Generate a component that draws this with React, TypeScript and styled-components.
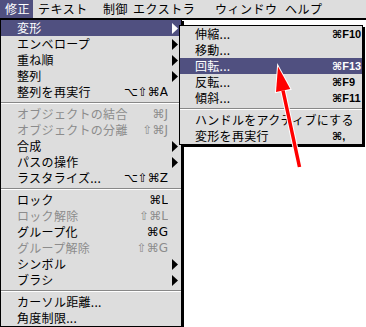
import styled, { createGlobalStyle } from "styled-components";

const GlobalStyle = createGlobalStyle`
  html, body {
    margin: 0;
    padding: 0;
    background: #ffffff;
  }
  body {
    font-family: "Noto Sans CJK JP", "DejaVu Sans", sans-serif;
  }
`;

type Entry =
  | "sep"
  | {
      label: string;
      shortcut?: string;
      sub?: boolean;
      disabled?: boolean;
      active?: boolean;
    };

const barItems = [
  { label: "修正", w: 33, active: true },
  { label: "テキスト", w: 65 },
  { label: "制御", w: 30 },
  { label: "エクストラ", w: 82 },
  { label: "ウィンドウ", w: 70 },
  { label: "ヘルプ", w: 60 },
];

const mainItems: Entry[] = [
  { label: "変形", sub: true, active: true },
  { label: "エンベロープ", sub: true },
  { label: "重ね順", sub: true },
  { label: "整列", sub: true },
  { label: "整列を再実行", shortcut: "⌥⇧⌘A" },
  "sep",
  { label: "オブジェクトの結合", shortcut: "⌘J", disabled: true },
  { label: "オブジェクトの分離", shortcut: "⇧⌘J", disabled: true },
  { label: "合成", sub: true },
  { label: "パスの操作", sub: true },
  { label: "ラスタライズ...", shortcut: "⌥⇧⌘Z" },
  "sep",
  { label: "ロック", shortcut: "⌘L" },
  { label: "ロック解除", shortcut: "⇧⌘L", disabled: true },
  { label: "グループ化", shortcut: "⌘G" },
  { label: "グループ解除", shortcut: "⇧⌘G", disabled: true },
  { label: "シンボル", sub: true },
  { label: "ブラシ", sub: true },
  "sep",
  { label: "カーソル距離..." },
  { label: "角度制限..." },
];

const subItems: Entry[] = [
  { label: "伸縮...", shortcut: "⌘F10" },
  { label: "移動..." },
  { label: "回転...", shortcut: "⌘F13", active: true },
  { label: "反転...", shortcut: "⌘F9" },
  { label: "傾斜...", shortcut: "⌘F11" },
  "sep",
  { label: "ハンドルをアクティブにする" },
  { label: "変形を再実行", shortcut: "⌘," },
];

function SubArrow({ active }: { active?: boolean }) {
  return (
    <ArrowIcon width="6" height="11" viewBox="0 0 6 11">
      <polygon points="0,0 6,5.5 0,11" fill={active ? "#ffffff" : "#000000"} />
    </ArrowIcon>
  );
}

function MenuList({ items, isSub }: { items: Entry[]; isSub?: boolean }) {
  return (
    <>
      {items.map((item, i) =>
        item === "sep" ? (
          <Separator key={i} />
        ) : (
          <Row key={i} $active={item.active} $disabled={item.disabled} $sub={isSub}>
            <Label>{item.label}</Label>
            {item.shortcut && (
              <Shortcut $sub={isSub}>{item.shortcut}</Shortcut>
            )}
            {item.sub && <SubArrow active={item.active} />}
          </Row>
        )
      )}
    </>
  );
}

export default function App() {
  return (
    <>
      <GlobalStyle />
      <Screen>
        <MenuBar>
          {barItems.map((b) => (
            <BarItem key={b.label} $w={b.w} $active={b.active}>
              {b.label}
            </BarItem>
          ))}
        </MenuBar>
        <Desktop />

        <MainMenu>
          <MenuList items={mainItems} />
        </MainMenu>

        <SubMenu>
          <MenuList items={subItems} isSub />
        </SubMenu>

        <Pointer width="366" height="327" viewBox="0 0 366 327">
          <line x1="299.5" y1="167" x2="283" y2="90.5" stroke="#ffffff" strokeWidth="5.5" />
          <polygon points="278,66.5 290.3,89 276,92" fill="#ffffff" stroke="#ffffff" strokeWidth="2" />
          <line x1="299.5" y1="167" x2="283" y2="90.5" stroke="#ff0000" strokeWidth="3.5" />
          <polygon points="278,66.5 290.3,89 276,92" fill="#ff0000" />
        </Pointer>
      </Screen>
    </>
  );
}

const Screen = styled.div`
  position: relative;
  width: 366px;
  height: 327px;
  overflow: hidden;
  background: #ffffff;
  display: flex;
  flex-direction: column;
`;

const MenuBar = styled.div`
  display: flex;
  height: 18px;
  background: #dddddd;
  border-bottom: 1px solid #000000;
`;

const BarItem = styled.div<{ $w: number; $active?: boolean }>`
  width: ${(p) => p.$w}px;
  flex: none;
  padding-left: 5px;
  box-sizing: border-box;
  font-size: 12px;
  line-height: 18px;
  letter-spacing: 0.5px;
  color: ${(p) => (p.$active ? "#ffffff" : "#000000")};
  background: ${(p) => (p.$active ? "#505080" : "transparent")};
  white-space: nowrap;
`;

const Desktop = styled.div`
  flex: 1;
  border-top: 1px solid #000000;
  background: #ffffff;
`;

const MainMenu = styled.div`
  position: absolute;
  left: 0;
  top: 19px;
  width: 182px;
  box-sizing: border-box;
  background: #dddddd;
  border: 1px solid #000000;
  box-shadow: 2px 2px 0 #000000;
`;

const SubMenu = styled.div`
  position: absolute;
  left: 179px;
  top: 25px;
  width: 184px;
  box-sizing: border-box;
  background: #dddddd;
  border: 1px solid #000000;
  box-shadow: 2px 2px 0 #000000;
`;

const Row = styled.div<{ $active?: boolean; $disabled?: boolean; $sub?: boolean }>`
  display: flex;
  align-items: center;
  height: 16px;
  padding-left: ${(p) => (p.$sub ? 15 : 16)}px;
  padding-right: ${(p) => (p.$sub ? 0 : 2)}px;
  font-size: 12px;
  line-height: 16px;
  white-space: nowrap;
  background: ${(p) => (p.$active ? "#505080" : "transparent")};
  color: ${(p) => (p.$active ? "#ffffff" : p.$disabled ? "#8c8c8c" : "#000000")};
`;

const Label = styled.span`
  flex: 1;
  letter-spacing: 0.3px;
`;

const Shortcut = styled.span<{ $sub?: boolean }>`
  flex: none;
  font-family: ${(p) =>
    p.$sub ? `"Liberation Sans", "DejaVu Sans", sans-serif` : `"DejaVu Sans", sans-serif`};
  font-weight: ${(p) => (p.$sub ? "bold" : "normal")};
  font-size: ${(p) => (p.$sub ? 11 : 12)}px;
  width: ${(p) => (p.$sub ? "30px" : "auto")};
  margin-right: ${(p) => (p.$sub ? 0 : 11)}px;
  text-align: ${(p) => (p.$sub ? "left" : "right")};
  overflow: hidden;
`;

const ArrowIcon = styled.svg`
  flex: none;
  margin-right: 1px;
`;

const Separator = styled.div`
  height: 6px;
  display: flex;
  flex-direction: column;
  justify-content: center;

  &::before {
    content: "";
    height: 1px;
    background: #888888;
  }
  &::after {
    content: "";
    height: 1px;
    background: #ffffff;
  }
`;

const Pointer = styled.svg`
  position: absolute;
  left: 0;
  top: 0;
  pointer-events: none;
`;
